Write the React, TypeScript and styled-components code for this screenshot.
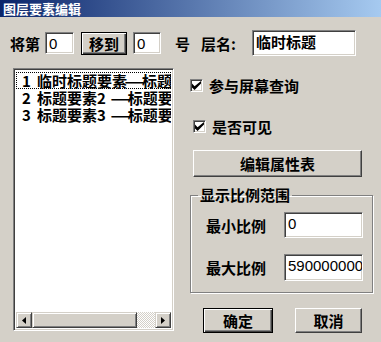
import styled, { createGlobalStyle } from 'styled-components'

const GlobalStyle = createGlobalStyle`
  html, body {
    margin: 0;
    padding: 0;
    background: #d4d0c8;
  }
  * { box-sizing: border-box; }
`

const cjk = `"Noto Sans CJK SC", "Liberation Sans", sans-serif`

const Dialog = styled.div`
  width: 381px;
  height: 342px;
  background: #d4d0c8;
  font-family: ${cjk};
  display: flex;
  flex-direction: column;
  overflow: hidden;
`

const TitleBar = styled.div`
  height: 17px;
  background: linear-gradient(to right, #0a246a, #a6caf0);
  color: #fff;
  font-size: 13px;
  font-weight: 700;
  line-height: 17px;
  padding-left: 3px;
`

const TopRow = styled.div`
  display: flex;
  align-items: center;
  height: 26px;
  margin-top: 13px;
  padding-left: 10px;
`

const Label = styled.span<{ $ml?: number; $w?: number }>`
  font-size: 15px;
  font-weight: 700;
  color: #000;
  white-space: nowrap;
  margin-left: ${p => p.$ml ?? 0}px;
  width: ${p => (p.$w ? `${p.$w}px` : 'auto')};
  line-height: 1;
`

const Field = styled.div<{ $w: number; $h?: number; $ml?: number; $bold?: boolean }>`
  width: ${p => p.$w}px;
  height: ${p => p.$h ?? 22}px;
  margin-left: ${p => p.$ml ?? 0}px;
  background: #fff;
  border-top: 1px solid #808080;
  border-left: 1px solid #808080;
  border-right: 1px solid #fff;
  border-bottom: 1px solid #fff;
  box-shadow: inset 1px 1px 0 #404040, inset -1px -1px 0 #d4d0c8;
  padding: 2px 0 0 3px;
  font-family: ${p => (p.$bold ? cjk : `"Liberation Sans", Arial, sans-serif`)};
  font-size: 15px;
  font-weight: ${p => (p.$bold ? 700 : 400)};
  color: #000;
  overflow: hidden;
  white-space: nowrap;
  line-height: 17px;
`

const Button = styled.div<{ $w: number; $h: number; $ml?: number; $mt?: number; $default?: boolean }>`
  width: ${p => p.$w}px;
  height: ${p => p.$h}px;
  margin-left: ${p => p.$ml ?? 0}px;
  margin-top: ${p => p.$mt ?? 0}px;
  display: flex;
  align-items: center;
  justify-content: center;
  font-size: 15px;
  font-weight: 700;
  color: #000;
  background: #d4d0c8;
  border: 1px solid;
  border-color: ${p => (p.$default ? '#000' : '#fff #404040 #404040 #fff')};
  box-shadow: ${p =>
    p.$default
      ? 'inset 1px 1px 0 #fff, inset -1px -1px 0 #404040, inset -2px -2px 0 #808080'
      : 'inset -1px -1px 0 #808080'};
`

const Main = styled.div`
  display: flex;
  margin-top: 12px;
  padding-left: 13px;
`

const ListBox = styled.div`
  width: 161px;
  height: 263px;
  background: #fff;
  border-top: 1px solid #808080;
  border-left: 1px solid #808080;
  border-right: 1px solid #fff;
  border-bottom: 1px solid #fff;
  box-shadow: inset 1px 1px 0 #404040, inset -1px -1px 0 #d4d0c8;
  padding: 2px;
  display: flex;
  flex-direction: column;
`

const Items = styled.div`
  flex: 1;
  overflow: hidden;
  padding-top: 1px;
`

const Item = styled.div<{ $focus?: boolean }>`
  display: flex;
  height: 17px;
  line-height: 17px;
  font-size: 15px;
  font-weight: 700;
  white-space: nowrap;
  overflow: hidden;
  padding-left: 6px;
  color: #000;
  outline: ${p => (p.$focus ? '1px dotted #000' : 'none')};
  outline-offset: -1px;
`

const ItemNo = styled.span`
  flex: none;
  width: 15px;
`

const Part = styled.span`
  flex: none;
`

const Dash = styled.span<{ $ml: number }>`
  flex: none;
  display: inline-block;
  width: 15px;
  margin-left: ${p => p.$ml}px;
  text-align: center;
  transform: scaleX(1.5);
`

const HScroll = styled.div`
  height: 16px;
  display: flex;
`

const ScrollBtn = styled.div`
  width: 16px;
  height: 16px;
  background: #d4d0c8;
  border-top: 1px solid #d4d0c8;
  border-left: 1px solid #d4d0c8;
  border-right: 1px solid #404040;
  border-bottom: 1px solid #404040;
  box-shadow: inset 1px 1px 0 #fff, inset -1px -1px 0 #808080;
  display: flex;
  align-items: center;
  justify-content: center;
`

const Thumb = styled(ScrollBtn)`
  width: 105px;
`

const Track = styled.div`
  flex: 1;
  background-color: #fff;
  background-image: repeating-conic-gradient(#d4d0c8 0 25%, #fff 0 50%);
  background-size: 2px 2px;
`

const Side = styled.div`
  width: 184px;
  margin-left: 15px;
  display: flex;
  flex-direction: column;
`

const CheckRow = styled.div<{ $mt: number; $ml: number }>`
  display: flex;
  align-items: center;
  margin-top: ${p => p.$mt}px;
  margin-left: ${p => p.$ml}px;
  gap: 6px;
  height: 16px;
`

const CheckBox = styled.div`
  width: 13px;
  height: 13px;
  background: #fff;
  border-top: 1px solid #808080;
  border-left: 1px solid #808080;
  border-right: 1px solid #fff;
  border-bottom: 1px solid #fff;
  box-shadow: inset 1px 1px 0 #404040, inset -1px -1px 0 #d4d0c8;
  display: flex;
  align-items: center;
  justify-content: center;
`

const GroupBox = styled.fieldset`
  margin: 10px 0 0 1px;
  width: 183px;
  height: 106px;
  border: 1px solid #808080;
  box-shadow: 1px 1px 0 #fff, inset 1px 1px 0 #fff;
  padding: 0;
  display: flex;
  flex-direction: column;
`

const Legend = styled.legend`
  font-size: 15px;
  font-weight: 700;
  padding: 0 2px;
  margin-left: 7px;
  line-height: 16px;
`

const GroupRow = styled.div<{ $mt: number }>`
  display: flex;
  align-items: center;
  margin-top: ${p => p.$mt}px;
  padding-left: 15px;
`

const Footer = styled.div`
  display: flex;
  margin-top: 15px;
  padding-left: 14px;
`

const Check = () => (
  <CheckBox>
    <svg width="9" height="9" viewBox="0 0 7 7">
      <path d="M0 2 L0 5 L2 7 L7 2 L7 0 L2 4 Z" fill="#000" />
    </svg>
  </CheckBox>
)

const Arrow = ({ dir }: { dir: 'left' | 'right' }) => (
  <svg width="4" height="7" viewBox="0 0 4 7">
    <path d={dir === 'left' ? 'M4 0 L0 3.5 L4 7 Z' : 'M0 0 L4 3.5 L0 7 Z'} fill="#000" />
  </svg>
)

const items: [string, string, number, string][] = [
  ['1', '临时标题要素', 0, '标题要素'],
  ['2', '标题要素2', 7, '标题要素2'],
  ['3', '标题要素3', 7, '标题要素3'],
]

export default function App() {
  return (
    <Dialog>
      <GlobalStyle />
      <TitleBar>图层要素编辑</TitleBar>
      <TopRow>
        <Label $w={35}>将第</Label>
        <Field $w={29}>0</Field>
        <Button $w={46} $h={23} $ml={7} $default>移到</Button>
        <Field $w={28} $ml={6}>0</Field>
        <Label $ml={14}>号</Label>
        <Label $ml={11}>层名:</Label>
        <Field $w={104} $h={26} $ml={16} $bold>临时标题</Field>
      </TopRow>
      <Main>
        <ListBox>
          <Items>
            {items.map(([n, a, gap, b], i) => (
              <Item key={n} $focus={i === 0}>
                <ItemNo>{n}</ItemNo>
                <Part>{a}</Part>
                <Dash $ml={gap}>—</Dash>
                <Part>{b}</Part>
              </Item>
            ))}
          </Items>
          <HScroll>
            <ScrollBtn><Arrow dir="left" /></ScrollBtn>
            <Thumb />
            <Track />
            <ScrollBtn><Arrow dir="right" /></ScrollBtn>
          </HScroll>
        </ListBox>
        <Side>
          <CheckRow $mt={9} $ml={1}>
            <Check />
            <Label>参与屏幕查询</Label>
          </CheckRow>
          <CheckRow $mt={25} $ml={4}>
            <Check />
            <Label>是否可见</Label>
          </CheckRow>
          <Button $w={169} $h={27} $ml={4} $mt={16}>编辑属性表</Button>
          <GroupBox>
            <Legend>显示比例范围</Legend>
            <GroupRow $mt={9}>
              <Label $w={78}>最小比例</Label>
              <Field $w={79} $h={26}>0</Field>
            </GroupRow>
            <GroupRow $mt={16}>
              <Label $w={78}>最大比例</Label>
              <Field $w={79} $h={27}>5900000000</Field>
            </GroupRow>
          </GroupBox>
          <Footer>
            <Button $w={70} $h={25} $default>确定</Button>
            <Button $w={67} $h={25} $ml={22}>取消</Button>
          </Footer>
        </Side>
      </Main>
    </Dialog>
  )
}
